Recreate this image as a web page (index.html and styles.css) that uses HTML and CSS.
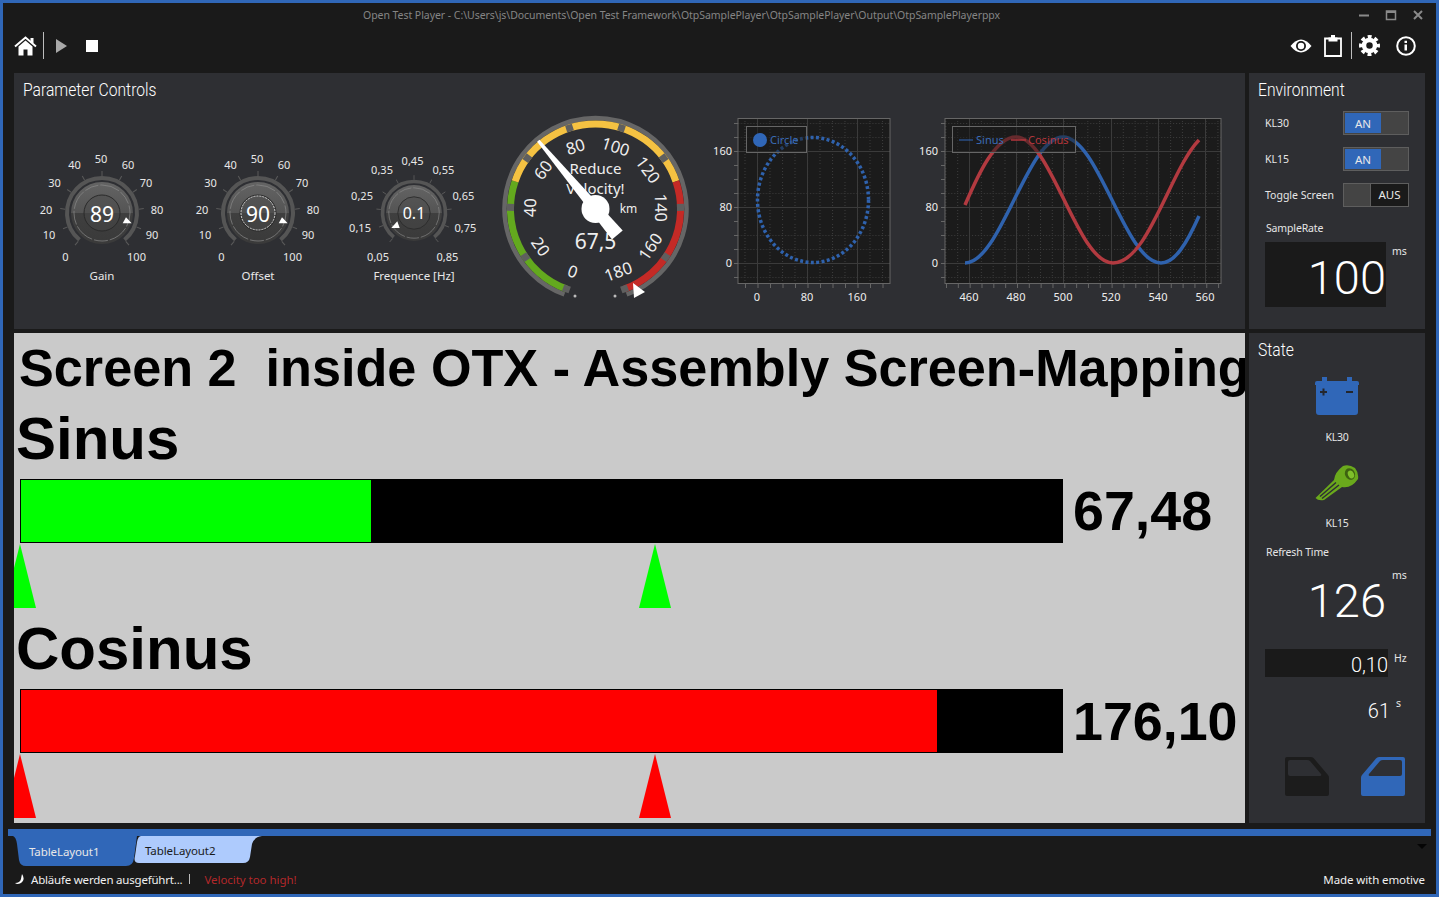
FILE: index.html
```html
<!DOCTYPE html>
<html lang="en">
<head>
    <meta charset="UTF-8">
    <title>Open Test Player</title>
    <link rel="stylesheet" href="styles.css">
</head>
<body>
    <svg class="defs" width="0" height="0">
        <defs>
            <linearGradient id="knobFill" x1="0" y1="0" x2="0" y2="1">
                <stop offset="0" stop-color="#646464"/>
                <stop offset="0.5" stop-color="#545454"/>
                <stop offset="0.5" stop-color="#3f3f3f"/>
                <stop offset="1" stop-color="#3a3a3a"/>
            </linearGradient>
            <pattern id="gridA" x="757" y="263" width="12.5" height="14" patternUnits="userSpaceOnUse">
                <path d="M0.5 0V14M0 0.5H12.5" stroke="#3c3c3c" stroke-dasharray="1 2" fill="none"/>
            </pattern>
            <pattern id="gridB" x="969" y="263" width="11.83" height="14" patternUnits="userSpaceOnUse">
                <path d="M0.5 0V14M0 0.5H11.83" stroke="#3c3c3c" stroke-dasharray="1 2" fill="none"/>
            </pattern>
            <g id="knobTicks">
                <path d="M0 -37V-42" transform="rotate(-140)"/>
                <path d="M0 -37V-42" transform="rotate(-112)"/>
                <path d="M0 -37V-42" transform="rotate(-84)"/>
                <path d="M0 -37V-42" transform="rotate(-56)"/>
                <path d="M0 -37V-42" transform="rotate(-28)"/>
                <path d="M0 -37V-42"/>
                <path d="M0 -37V-42" transform="rotate(28)"/>
                <path d="M0 -37V-42" transform="rotate(56)"/>
                <path d="M0 -37V-42" transform="rotate(84)"/>
                <path d="M0 -37V-42" transform="rotate(112)"/>
                <path d="M0 -37V-42" transform="rotate(140)"/>
            </g>
            <g id="knobBody">
                <use href="#knobTicks" class="knob-tick"/>
                <path class="knob-arc" d="M-22.5 26.8A35 35 0 1 1 22.5 26.8"/>
                <circle r="31" fill="url(#knobFill)"/>
                <circle class="knob-rim" r="28"/>
                <circle class="knob-hub" r="18"/>
            </g>
            <path id="doorShape" d="M3 0H27Q29 0 30 1.500L44 18Q45 19 45 21V37Q45 39 43 39H3Q1 39 1 37V2Q1 0 3 0ZM6 3Q4 3 4 5V17Q4 19 6 19H36Q38 19 37 17L26 4Q25 3 23 3Z" fill-rule="evenodd"/>
        </defs>
    </svg>

    <div class="window">
        <div class="titlebar">
            <span class="title-text">Open Test Player - C:\Users\js\Documents\Open Test Framework\OtpSamplePlayer\OtpSamplePlayer\Output\OtpSamplePlayerppx</span>
            <div class="win-controls">
                <svg width="12" height="12" viewBox="0 0 12 12"><path d="M1 6.500H11" stroke="#8a8a8a" stroke-width="2"/></svg>
                <svg width="12" height="12" viewBox="0 0 12 12"><path d="M1.500 2H10.500V10.500H1.500ZM1.500 2.500H10.500" fill="none" stroke="#8a8a8a" stroke-width="1.500"/><path d="M1 3H11" stroke="#8a8a8a" stroke-width="2"/></svg>
                <svg width="12" height="12" viewBox="0 0 12 12"><path d="M2 2L10 10M10 2L2 10" stroke="#8a8a8a" stroke-width="2"/></svg>
            </div>
        </div>

        <div class="toolbar">
            <svg class="ic-home" width="23" height="20" viewBox="0 0 23 20">
                <path d="M4.500 10.500L11.500 4.500L18.500 10.500V19.500H13.500V13.500H9.500V19.500H4.500Z" fill="#fff"/>
                <path d="M1 10.500L11.500 1.500L22 10.500" fill="none" stroke="#fff" stroke-width="2"/>
                <path d="M16.500 2H19.500V7H16.500Z" fill="#fff"/>
            </svg>
            <span class="tool-sep"></span>
            <svg class="ic-play" width="11" height="14" viewBox="0 0 11 14"><path d="M0 0L11 7L0 14Z" fill="#a9a9a9"/></svg>
            <span class="ic-stop"></span>
            <div class="tool-right">
                <svg class="ic-eye" width="22" height="14" viewBox="0 0 22 14">
                    <path d="M0.500 7Q11 -6 21.500 7Q11 20 0.500 7Z" fill="#fff"/>
                    <circle cx="11" cy="7" r="5" fill="#1a1a1a"/>
                    <circle cx="11" cy="7" r="3.200" fill="#fff"/>
                </svg>
                <svg class="ic-clip" width="18" height="22" viewBox="0 0 18 22">
                    <path d="M1 3.500H17V21H1Z" fill="none" stroke="#fff" stroke-width="1.800"/>
                    <path d="M4.500 6.500V2.500H7V0H11V2.500H13.500V6.500Z" fill="#fff"/>
                </svg>
                <span class="tool-sep"></span>
                <svg class="ic-gear" width="21" height="21" viewBox="0 0 21 21">
                    <circle cx="10.500" cy="10.500" r="5.500" fill="none" stroke="#fff" stroke-width="4.500"/>
                    <circle cx="10.500" cy="10.500" r="8.800" fill="none" stroke="#fff" stroke-width="3.400" stroke-dasharray="3.900 3" stroke-dashoffset="2"/>
                </svg>
                <svg class="ic-info" width="20" height="20" viewBox="0 0 20 20">
                    <circle cx="10" cy="10" r="8.800" fill="none" stroke="#fff" stroke-width="2"/>
                    <path d="M8.500 8.500H11V14.500H8.500ZM8.500 4.800H11V7H8.500Z" fill="#fff"/>
                </svg>
            </div>
        </div>

        <div class="layout">
            <section class="panel">
                <h2 class="panel-title">Parameter Controls</h2>
                <div class="controls-row">
                    <svg class="knob" width="156" height="190" viewBox="-78 -108 156 190">
                        <use href="#knobBody"/>
                        <g class="knob-label">
                            <text x="-36.500" y="43.500">0</text><text x="-53" y="21.500">10</text><text x="-56" y="-4">20</text>
                            <text x="-47.500" y="-30.500">30</text><text x="-27.500" y="-48.500">40</text><text x="-1" y="-54.500">50</text>
                            <text x="26" y="-48.500">60</text><text x="44" y="-30.500">70</text><text x="55" y="-4">80</text>
                            <text x="50" y="21.500">90</text><text x="34.500" y="43.500">100</text>
                        </g>
                        <text class="knob-value" y="1">89</text>
                        <path class="knob-pointer" d="M24 4.300L20.700 10.300H29.700Z"/>
                        <text class="knob-caption" y="62">Gain</text>
                    </svg>
                    <svg class="knob" width="156" height="190" viewBox="-78 -108 156 190">
                        <use href="#knobBody"/>
                        <circle class="knob-focus" r="17"/>
                        <g class="knob-label">
                            <text x="-36.500" y="43.500">0</text><text x="-53" y="21.500">10</text><text x="-56" y="-4">20</text>
                            <text x="-47.500" y="-30.500">30</text><text x="-27.500" y="-48.500">40</text><text x="-1" y="-54.500">50</text>
                            <text x="26" y="-48.500">60</text><text x="44" y="-30.500">70</text><text x="55" y="-4">80</text>
                            <text x="50" y="21.500">90</text><text x="34.500" y="43.500">100</text>
                        </g>
                        <text class="knob-value" y="1">90</text>
                        <path class="knob-pointer" d="M24 4.300L20.700 10.300H29.700Z"/>
                        <text class="knob-caption" y="62">Offset</text>
                    </svg>
                    <svg class="knob" width="156" height="190" viewBox="-78 -108 156 190">
                        <g transform="scale(0.9)"><use href="#knobBody"/></g>
                        <g class="knob-label">
                            <text x="-36" y="43">0,05</text><text x="-54" y="14">0,15</text><text x="-52" y="-18">0,25</text>
                            <text x="-32" y="-43.500">0,35</text><text x="-1.500" y="-52.500">0,45</text><text x="29.500" y="-43.500">0,55</text>
                            <text x="49.500" y="-18">0,65</text><text x="51.500" y="14">0,75</text><text x="33.500" y="43">0,85</text>
                        </g>
                        <text class="knob-value small" y="0">0.1</text>
                        <path class="knob-pointer" d="M-16.700 8.300L-22.700 15H-14.300Z"/>
                        <text class="knob-caption" y="62">Frequence [Hz]</text>
                    </svg>

                    <svg class="gauge" width="200" height="200" viewBox="496 105 200 200">
                        <path class="gauge-ring" d="M564.400 294.500A91 91 0 1 1 626.600 294.500"/>
                        <path class="gauge-band band-green" d="M566.400 288.900A85 85 0 0 1 515.100 181.300"/>
                        <path class="gauge-band band-yellow" d="M515.100 181.300A85 85 0 0 1 675.900 181.300"/>
                        <path class="gauge-band band-red" d="M675.900 181.300A85 85 0 0 1 624.600 288.900"/>
                        <g transform="translate(595.500 209)">
                            <rect class="gauge-tick" x="-3.500" y="-88.500" width="7" height="7" transform="rotate(-160)"/>
                            <rect class="gauge-tick" x="-3.500" y="-88.500" width="7" height="7" transform="rotate(-124.400)"/>
                            <rect class="gauge-tick" x="-3.500" y="-88.500" width="7" height="7" transform="rotate(-88.900)"/>
                            <rect class="gauge-tick" x="-3.500" y="-88.500" width="7" height="7" transform="rotate(-53.300)"/>
                            <rect class="gauge-tick" x="-3.500" y="-88.500" width="7" height="7" transform="rotate(-17.800)"/>
                            <rect class="gauge-tick" x="-3.500" y="-88.500" width="7" height="7" transform="rotate(17.800)"/>
                            <rect class="gauge-tick" x="-3.500" y="-88.500" width="7" height="7" transform="rotate(53.300)"/>
                            <rect class="gauge-tick" x="-3.500" y="-88.500" width="7" height="7" transform="rotate(88.900)"/>
                            <rect class="gauge-tick" x="-3.500" y="-88.500" width="7" height="7" transform="rotate(124.400)"/>
                            <rect class="gauge-tick" x="-3.500" y="-88.500" width="7" height="7" transform="rotate(160)"/>
                            <g class="gauge-label">
                                <text transform="rotate(-160) translate(0 -66) rotate(180)">0</text>
                                <text transform="rotate(-124.400) translate(0 -66) rotate(180)">20</text>
                                <text transform="rotate(-88.900) translate(0 -66)">40</text>
                                <text transform="rotate(-53.300) translate(0 -66)">60</text>
                                <text transform="rotate(-17.800) translate(0 -66)">80</text>
                                <text transform="rotate(17.800) translate(0 -66)">100</text>
                                <text transform="rotate(53.300) translate(0 -66)">120</text>
                                <text transform="rotate(88.900) translate(0 -66)">140</text>
                                <text transform="rotate(124.400) translate(0 -66) rotate(180)">160</text>
                                <text transform="rotate(160) translate(0 -66) rotate(180)">180</text>
                            </g>
                        </g>
                        <text class="gauge-msg" x="595.500" y="167.500">Reduce</text>
                        <text class="gauge-msg" x="595.500" y="187.500">Velocity!</text>
                        <text class="gauge-unit" x="628.500" y="208">km</text>
                        <text class="gauge-value" x="595.500" y="240.500">67,5</text>
                        <polygon class="needle" points="-1.500,-89 1.500,-89 7,34 -7,34" transform="translate(595.500 209) rotate(-40)"/>
                        <circle class="needle" cx="595.500" cy="209" r="14"/>
                        <circle class="gauge-dot" cx="575" cy="296" r="1.500"/>
                        <circle class="gauge-dot" cx="615" cy="296" r="1.500"/>
                        <polygon class="needle" points="633,283 634,298 645,292"/>
                    </svg>

                    <svg class="chart-a" width="200" height="200" viewBox="700 105 200 200">
                        <rect class="plot-bg" x="738" y="118.500" width="152" height="165"/>
                        <rect x="738" y="118.500" width="152" height="165" fill="url(#gridA)"/>
                        <path class="plot-major" d="M757.500 119V283M807.500 119V283M857.500 119V283M738 151.500H890M738 207.500H890M738 263.500H890"/>
                        <rect class="plot-frame" x="738" y="118.500" width="152" height="165"/>
                        <line class="plot-ticks" x1="745" y1="286" x2="890" y2="286" stroke-dasharray="1 11.500"/>
                        <line class="plot-ticks" x1="736" y1="123" x2="736" y2="280" stroke-dasharray="1 13"/>
                        <ellipse class="series-circle" cx="813" cy="200" rx="55.500" ry="62.500"/>
                        <rect class="legend-box" x="746.500" y="126.500" width="60" height="26"/>
                        <circle class="legend-dot" cx="760" cy="140" r="7"/>
                        <text class="legend-blue" x="770" y="144">Circle</text>
                        <g class="axis-y"><text x="732" y="155">160</text><text x="732" y="211">80</text><text x="732" y="267">0</text></g>
                        <g class="axis-x"><text x="757" y="301">0</text><text x="807" y="301">80</text><text x="857" y="301">160</text></g>
                    </svg>

                    <svg class="chart-b" width="325" height="200" viewBox="905 105 325 200">
                        <rect class="plot-bg" x="945" y="118.500" width="276" height="165"/>
                        <rect x="945" y="118.500" width="276" height="165" fill="url(#gridB)"/>
                        <path class="plot-major" d="M969.500 119V283M1016.500 119V283M1063.500 119V283M1111.500 119V283M1158.500 119V283M1205.500 119V283M945 151.500H1221M945 207.500H1221M945 263.500H1221"/>
                        <rect class="plot-frame" x="945" y="118.500" width="276" height="165"/>
                        <line class="plot-ticks" x1="946" y1="286" x2="1220" y2="286" stroke-dasharray="1 10.830"/>
                        <line class="plot-ticks" x1="943" y1="123" x2="943" y2="280" stroke-dasharray="1 13"/>
                        <path class="series-sin" d="M965 263C1000.700 263 1027.300 137 1063 137C1098.700 137 1125.300 263 1161 263C1175 263 1187 243 1199 216"/>
                        <path class="series-cos" d="M965 205C978 175 995 137 1016 137C1051 137 1077 263 1113 263C1148 263 1170 170 1199 140"/>
                        <rect class="legend-box" x="952.500" y="126.500" width="123" height="26"/>
                        <path class="legend-line-blue" d="M959 140H973"/>
                        <text class="legend-blue" x="976" y="144">Sinus</text>
                        <path class="legend-line-red" d="M1011 140H1026"/>
                        <text class="legend-red" x="1028" y="144">Cosinus</text>
                        <g class="axis-y"><text x="938" y="155">160</text><text x="938" y="211">80</text><text x="938" y="267">0</text></g>
                        <g class="axis-x"><text x="969" y="301">460</text><text x="1016" y="301">480</text><text x="1063" y="301">500</text><text x="1111" y="301">520</text><text x="1158" y="301">540</text><text x="1205" y="301">560</text></g>
                    </svg>
                </div>
            </section>

            <section class="panel side">
                <h2 class="panel-title">Environment</h2>
                <div class="switches">
                    <div class="switch-row">
                        <span>KL30</span>
                        <div class="toggle"><span class="toggle-on">AN</span></div>
                    </div>
                    <div class="switch-row">
                        <span>KL15</span>
                        <div class="toggle"><span class="toggle-on">AN</span></div>
                    </div>
                    <div class="switch-row">
                        <span>Toggle Screen</span>
                        <div class="toggle off"><span class="toggle-off">AUS</span></div>
                    </div>
                </div>
                <div class="field-label sample-label">SampleRate</div>
                <div class="readout">
                    <div class="readout-box dark">100</div>
                    <span class="unit">ms</span>
                </div>
            </section>

            <section class="panel screen">
                <div class="screen-title">Screen 2  inside OTX - Assembly Screen-Mapping</div>

                <div class="signal">
                    <div class="signal-name">Sinus</div>
                    <div class="signal-row">
                        <div class="bar"><div class="bar-fill green" style="width: 33.6%"></div></div>
                        <div class="signal-value">67,48</div>
                    </div>
                    <div class="marker-track">
                        <span class="marker clipped green"></span>
                        <span class="marker green" style="left: 625px"></span>
                    </div>
                </div>

                <div class="signal">
                    <div class="signal-name">Cosinus</div>
                    <div class="signal-row">
                        <div class="bar"><div class="bar-fill red" style="width: 88%"></div></div>
                        <div class="signal-value long">176,10</div>
                    </div>
                    <div class="marker-track">
                        <span class="marker clipped red"></span>
                        <span class="marker red" style="left: 625px"></span>
                    </div>
                </div>
            </section>

            <section class="panel side">
                <h2 class="panel-title">State</h2>
                <div class="state-item">
                    <svg class="ic-battery" width="44" height="38" viewBox="0 0 44 38">
                        <path d="M7 0H12V4H32V0H37V4H42Q44 4 44 6V8H43V35Q43 38 40 38H4Q1 38 1 35V8H0V6Q0 4 2 4H7Z" fill="#3067b8"/>
                        <path d="M5 15H12M8.500 11.500V18.500M31 15H38" stroke="#24272d" stroke-width="2"/>
                    </svg>
                    <span class="state-name kl30">KL30</span>
                </div>
                <div class="state-item">
                    <svg class="ic-key" width="44" height="36" viewBox="0 0 44 36">
                        <path d="M0.500 33L19 15Q20 7 28 1Q34 -1 40 3Q44 8 43 14Q36 24 27 22L9 35Q3 36 0.500 33Z" fill="#6aa91c"/>
                        <path d="M5 31.500L21 17.500M7 33.500L24 20" stroke="#2e2f33" stroke-width="1.500"/>
                        <ellipse cx="35" cy="9" rx="5" ry="6" fill="#3d6210" transform="rotate(-25 35 9)"/>
                        <ellipse cx="36" cy="9.500" rx="3" ry="4" fill="#7fbf2a" transform="rotate(-25 36 9.500)"/>
                    </svg>
                    <span class="state-name kl15">KL15</span>
                </div>
                <div class="field-label refresh-label">Refresh Time</div>
                <div class="readout refresh">
                    <div class="readout-box">126</div>
                    <span class="unit">ms</span>
                </div>
                <div class="readout small-readout">
                    <div class="readout-box dark">0,10</div>
                    <span class="unit">Hz</span>
                </div>
                <div class="readout seconds">
                    <div class="readout-box">61</div>
                    <span class="unit">s</span>
                </div>
                <div class="doors">
                    <svg class="door closed" width="46" height="39" viewBox="0 0 46 39"><use href="#doorShape"/></svg>
                    <svg class="door open" width="46" height="39" viewBox="0 0 46 39"><use href="#doorShape"/></svg>
                </div>
            </section>
        </div>

        <div class="tab-rule"></div>
        <div class="tabs">
            <div class="tab first">TableLayout1</div>
            <div class="tab second">TableLayout2</div>
            <span class="tab-menu"></span>
        </div>

        <div class="statusbar">
            <svg class="spinner" width="10" height="10" viewBox="0 0 10 10"><path d="M7 0Q11 6 5 9.500Q2 10.500 0 9Q5 9 6 5Q6.500 2 7 0Z" fill="#fff"/></svg>
            <span>Abläufe werden ausgeführt...</span>
            <span class="status-sep"></span>
            <span class="status-alert">Velocity too high!</span>
            <span class="status-made">Made with emotive</span>
        </div>
    </div>
</body>
</html>
```

FILE: styles.css
```css
:root {
    --blue: #3067b8;
    --background: #1a1a1a;
    --surface: #2e2f33;
    --text: #e6e6e6;
}

* {
    box-sizing: border-box;
    margin: 0;
    padding: 0;
}

html, body {
    height: 100%;
    overflow: hidden;
}

body {
    font-family: "Noto Sans", sans-serif;
    font-size: 11px;
    background: var(--background);
    color: var(--text);
}

.defs {
    position: absolute;
}

.window {
    width: 1439px;
    height: 897px;
    border: 3px solid var(--blue);
    background: var(--background);
    display: flex;
    flex-direction: column;
}

/* title + toolbar */
.titlebar {
    height: 24px;
    display: flex;
    align-items: center;
    padding-left: 360px;
    flex: none;
}

.title-text {
    color: #858585;
    font-size: 10.5px;
    letter-spacing: -0.05px;
    white-space: nowrap;
}

.win-controls {
    margin-left: auto;
    display: flex;
    gap: 15px;
    padding-right: 12px;
}

.toolbar {
    height: 46px;
    flex: none;
    display: flex;
    align-items: center;
    padding: 0 20px 9px 11px;
}

.ic-home {
    margin-right: -1px;
}

.tool-sep {
    width: 1px;
    height: 27px;
    background: #bdbdbd;
    margin: 0 7px;
}

.ic-play {
    margin: 0 19px 0 5px;
}

.ic-stop {
    width: 12px;
    height: 12px;
    background: #fff;
}

.tool-right {
    margin-left: auto;
    display: flex;
    align-items: center;
}

.ic-clip {
    margin-left: 12px;
    margin-right: 2px;
}

.ic-info {
    margin-left: 16px;
}

/* main grid */
.layout {
    display: grid;
    grid-template-columns: 1231px 176px;
    grid-template-rows: 256px 490px;
    gap: 4px;
    padding-left: 11px;
    flex: none;
}

.panel {
    background: var(--surface);
}

.panel-title {
    font-family: "Roboto", sans-serif;
    font-size: 18px;
    font-weight: 300;
    color: #fff;
    height: 32px;
    line-height: 34px;
    padding-left: 9px;
    white-space: nowrap;
    transform: scaleX(0.87);
    transform-origin: 9px 0;
}

.controls-row {
    display: flex;
    padding-left: 10px;
}

.controls-row svg {
    flex: none;
}

.gauge {
    margin-left: 4px;
}

.chart-a {
    margin-left: 4px;
}

.chart-b {
    margin-left: 5px;
}

/* knobs */
.knob text {
    text-anchor: middle;
    dominant-baseline: central;
}

.knob-label text {
    font-size: 11px;
    fill: #e8e8e8;
}

.knob-tick {
    stroke: #5a5a5a;
    stroke-width: 1;
    fill: none;
}

.knob-arc {
    fill: none;
    stroke: #555;
    stroke-width: 4;
}

.knob-rim {
    fill: none;
    stroke: #8a8a8a;
    stroke-width: 0.7;
    stroke-dasharray: 14 2 20 2;
}

.knob-hub {
    fill: #4a4a4a;
    fill-opacity: 0.45;
    stroke: #2a2a2a;
}

.knob-focus {
    fill: none;
    stroke: #cfcfcf;
    stroke-dasharray: 2 1;
}

.knob-value {
    font-size: 21px;
    fill: #fff;
}

.knob-value.small {
    font-size: 16px;
}

.knob-pointer {
    fill: #fff;
}

.knob-caption {
    font-size: 11.5px;
    fill: #e8e8e8;
}

/* speed gauge */
.gauge-ring {
    fill: none;
    stroke: #666;
    stroke-width: 4.5;
}

.gauge-band {
    fill: none;
    stroke-width: 7;
}

.band-green {
    stroke: #63a91e;
}

.band-yellow {
    stroke: #f5c242;
}

.band-red {
    stroke: #c42a26;
}

.gauge-tick {
    fill: #5f5f5f;
}

.gauge-label text {
    font-size: 16.5px;
    fill: #eee;
    text-anchor: middle;
    dominant-baseline: central;
}

.gauge-msg {
    font-size: 15px;
    fill: #eee;
    text-anchor: middle;
    dominant-baseline: central;
}

.gauge-unit {
    font-size: 12px;
    fill: #eee;
    text-anchor: middle;
    dominant-baseline: central;
}

.gauge-value {
    font-size: 21px;
    fill: #eee;
    text-anchor: middle;
    dominant-baseline: central;
}

.needle {
    fill: #fff;
}

.gauge-dot {
    fill: #bbb;
}

/* charts */
.plot-bg {
    fill: #1b1b1b;
}

.plot-major {
    fill: none;
    stroke: #3b3b3b;
}

.plot-frame {
    fill: none;
    stroke: #666;
}

.plot-ticks {
    stroke: #666;
    stroke-width: 4;
}

.series-circle {
    fill: none;
    stroke: #2f62ad;
    stroke-width: 3.5;
    stroke-dasharray: 3 2.4;
}

.series-sin {
    fill: none;
    stroke: #2f62ad;
    stroke-width: 3.5;
}

.series-cos {
    fill: none;
    stroke: #b23a40;
    stroke-width: 3.5;
}

.legend-box {
    fill: #1a1a1a;
    fill-opacity: 0.5;
    stroke: #666;
}

.legend-dot {
    fill: #3067b8;
}

.legend-blue {
    font-size: 11px;
    fill: #3a6cb8;
}

.legend-red {
    font-size: 11px;
    fill: #b5363c;
}

.legend-line-blue {
    stroke: #3067b8;
}

.legend-line-red {
    stroke: #b5363c;
    stroke-width: 1.5;
}

.axis-y text {
    font-size: 11px;
    fill: #eee;
    text-anchor: end;
}

.axis-x text {
    font-size: 11px;
    fill: #eee;
    text-anchor: middle;
}

/* side panels */
.switches {
    display: flex;
    flex-direction: column;
    gap: 12px;
    padding: 6px 16px 0;
}

.switch-row {
    display: flex;
    align-items: center;
    justify-content: space-between;
    height: 24px;
    font-size: 10.5px;
}

.toggle {
    width: 66px;
    height: 24px;
    border: 1px solid #5e5e5e;
    background: #444;
    padding: 1px 0 0 1px;
    display: flex;
    font-size: 11.5px;
}

.toggle.off {
    justify-content: flex-end;
    padding: 0;
}

.toggle-on {
    width: 36px;
    height: 20px;
    background: var(--blue);
    color: #e8e8e8;
    text-align: center;
    line-height: 21px;
}

.toggle-off {
    width: 38px;
    background: var(--background);
    border-left: 1px solid #5e5e5e;
    color: #e8e8e8;
    text-align: center;
    line-height: 22px;
}

.field-label {
    font-size: 10.5px;
    letter-spacing: -0.15px;
    padding-left: 17px;
    line-height: 14px;
}

.sample-label {
    margin-top: 14px;
}

.readout {
    display: flex;
    padding-left: 16px;
}

.readout-box {
    width: 121px;
    height: 65px;
    text-align: right;
    color: #fff;
    font-size: 47px;
    font-weight: 300;
    line-height: 71px;
    font-family: "Roboto", sans-serif;
}

.readout-box.dark {
    background: var(--background);
}

.unit {
    font-size: 10.5px;
    margin-left: 6px;
    line-height: 18px;
}

.sample-label + .readout {
    margin-top: 7px;
}

.state-item {
    display: flex;
    flex-direction: column;
    align-items: center;
}

.state-item svg {
    display: block;
}

.ic-battery {
    margin-top: 12px;
}

.ic-key {
    margin-top: 21px;
}

.state-name {
    font-size: 10.5px;
    letter-spacing: -0.2px;
    line-height: 14px;
    margin-top: 15px;
}

.refresh-label {
    margin-top: 15px;
}

.refresh {
    margin-top: 7px;
}

.refresh .readout-box {
    line-height: 69px;
}

.small-readout {
    margin-top: 18px;
}

.small-readout .readout-box {
    width: 123px;
    height: 28px;
    font-size: 20px;
    line-height: 33px;
}

.seconds {
    margin-top: 20px;
}

.seconds .readout-box {
    width: 125px;
    height: 28px;
    font-size: 20px;
    line-height: 28px;
}

.seconds .unit {
    line-height: 12px;
}

.doors {
    display: flex;
    gap: 30px;
    margin-top: 32px;
    padding-left: 35px;
}

.door.closed {
    fill: #1c1c1c;
}

.door.open {
    fill: var(--blue);
    transform: scaleX(-1);
}

/* screen 2 area */
.screen {
    background: #cacaca;
    overflow: hidden;
    color: #000;
    font-family: "Liberation Sans", Arial, sans-serif;
    font-weight: bold;
}

.screen-title {
    font-size: 52.2px;
    line-height: 70px;
    height: 70px;
    padding-left: 5px;
    white-space: pre;
}

.signal {
    height: 210px;
}

.signal-name {
    font-size: 60px;
    line-height: 72px;
    height: 70px;
    padding-left: 2px;
}

.signal-row {
    display: flex;
    align-items: center;
    margin-top: 6px;
    padding-left: 6px;
}

.bar {
    width: 1043px;
    height: 64px;
    background: #000;
    padding: 1px;
    flex: none;
}

.bar-fill {
    height: 100%;
}

.bar-fill.green {
    background: #0f0;
}

.bar-fill.red {
    background: #f00;
}

.signal-value {
    font-size: 55.6px;
    line-height: 64px;
    margin-left: 10px;
    white-space: nowrap;
}

.signal-value.long {
    font-size: 53.8px;
}

.marker-track {
    position: relative;
    height: 65px;
}

.marker {
    position: absolute;
    top: 1px;
    width: 32px;
    height: 64px;
    clip-path: polygon(50% 0, 100% 100%, 0 100%);
}

.marker.clipped {
    left: -10px;
}

.marker.green {
    background: #0f0;
}

.marker.red {
    background: #f00;
}

/* tabs + status */
.tab-rule {
    height: 7px;
    background: var(--blue);
    margin: 6px 5px 0;
    flex: none;
}

.tabs {
    height: 30px;
    flex: none;
    display: flex;
    position: relative;
    padding-left: 10px;
}

.tab {
    font-size: 11.5px;
    letter-spacing: -0.1px;
}

.tab.first {
    width: 124px;
    height: 30px;
    background: var(--blue);
    color: #e8e8e8;
    padding: 8px 0 0 16px;
    clip-path: path("M0 0H124L121 22Q120 30 113 30H13Q7 30 6 24L4 8Q3 1 0 0Z");
}

.tab.second {
    width: 128px;
    height: 27px;
    margin-left: -3px;
    background: #aecbfd;
    color: #1a1a1a;
    padding: 7px 0 0 11px;
    clip-path: path("M7 0H128Q120 1 118 8L116 21Q115 27 109 27H5Q-1 27 1 20L3 6Q4 0 7 0Z");
}

.tab-menu {
    position: absolute;
    right: 9px;
    top: 8px;
    border: 5px solid transparent;
    border-top: 5px solid #050505;
    border-bottom: 0;
}

.statusbar {
    flex: 1;
    display: flex;
    align-items: center;
    padding: 0 10px 2px 12px;
    font-size: 11.5px;
    letter-spacing: -0.2px;
    color: #f0f0f0;
}

.spinner {
    margin-right: 6px;
}

.status-sep {
    width: 1px;
    height: 10px;
    background: #bbb;
    margin: 0 14px 0 7px;
}

.status-alert {
    color: #b3282a;
    letter-spacing: -0.05px;
}

.status-made {
    margin-left: auto;
    margin-right: 1px;
    letter-spacing: -0.1px;
}
```
